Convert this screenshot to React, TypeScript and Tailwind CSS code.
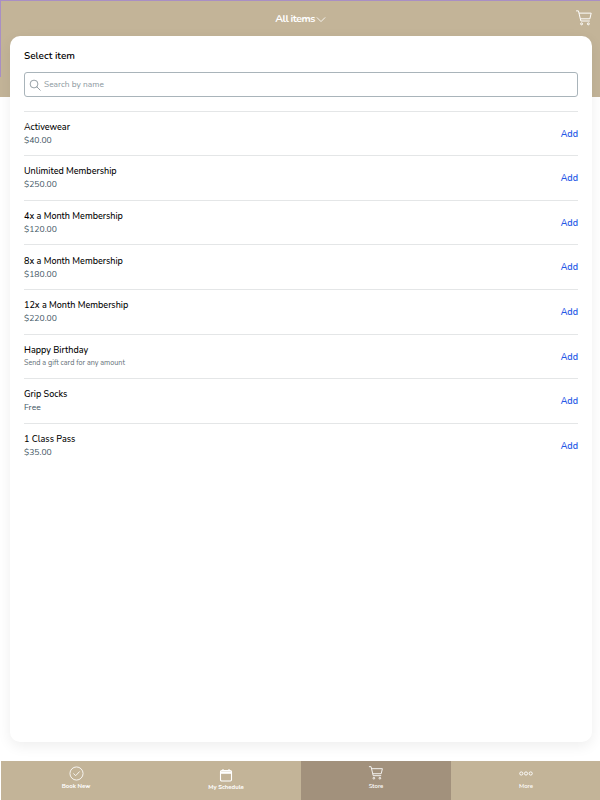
const items = [
  { name: "Activewear", sub: "$40.00" },
  { name: "Unlimited Membership", sub: "$250.00" },
  { name: "4x a Month Membership", sub: "$120.00" },
  { name: "8x a Month Membership", sub: "$180.00" },
  { name: "12x a Month Membership", sub: "$220.00" },
  { name: "Happy Birthday", sub: "Send a gift card for any amount", small: true },
  { name: "Grip Socks", sub: "Free" },
  { name: "1 Class Pass", sub: "$35.00" },
];

function Cart({ className }: { className: string }) {
  return (
    <svg viewBox="0 0 24 24" fill="none" stroke="currentColor" strokeWidth="1.3" className={className}>
      <path d="M2 2.5h2.6l3.2 13.5h11.4" strokeLinecap="round" strokeLinejoin="round" />
      <path d="M5.4 5.5h16.2l-1.8 7.6H7.2" strokeLinejoin="round" />
      <circle cx="8.8" cy="19.8" r="1.3" />
      <circle cx="17.8" cy="19.8" r="1.3" />
    </svg>
  );
}

export default function App() {
  return (
    <div className="relative h-[800px] w-[600px] overflow-hidden bg-white font-['Nunito','Noto_Sans',sans-serif] text-black">
      <div className="h-[97px] bg-[#c3b498]">
        <div className="h-[77px] border-l border-t border-[#a98fc4]">
          <div className="relative flex h-[35px] items-center justify-center pt-px text-white">
            <span className="text-[10.5px] font-bold tracking-[-0.5px]">All items</span>
            <svg viewBox="0 0 12 8" fill="none" stroke="currentColor" strokeWidth="1" className="ml-px h-[7px] w-[10px]">
              <path d="M1 1.5l5 5 5-5" />
            </svg>
            <Cart className="absolute right-[7px] top-[8px] h-[18px] w-[18px]" />
          </div>
        </div>
      </div>

      <div className="ml-[10px] -mt-[61px] flex h-[706px] w-[582px] flex-col rounded-[10px] bg-white px-[14px] shadow-[0_4px_14px_rgba(0,0,0,0.07)]">
        <h1 className="mt-[13px] text-[10px] font-semibold leading-[14px]">Select item</h1>
        <div className="mt-[9px] flex h-[25px] items-center rounded-[3px] border border-[#a9b4ba] pl-[4px]">
          <svg viewBox="0 0 16 16" fill="none" stroke="#74828a" strokeWidth="1" className="h-[12px] w-[12px]">
            <circle cx="6.7" cy="6.7" r="5.2" />
            <path d="M10.5 10.5l4.5 4.5" strokeLinecap="round" />
          </svg>
          <span className="ml-[3px] pt-px text-[8.4px] text-[#8a969d]">Search by name</span>
        </div>
        <ul className="mt-[13.6px]">
          {items.map((item) => (
            <li key={item.name} className="flex h-[44.6px] items-center justify-between border-t border-[#e4e6e7]">
              <div className="pt-px">
                <div className="text-[9px] font-medium leading-[13px]">{item.name}</div>
                <div className={item.small ? "text-[7.2px] leading-[13px] text-[#5f6e76]" : "text-[8.6px] leading-[13px] text-[#3e5563]"}>
                  {item.sub}
                </div>
              </div>
              <span className="pt-[2px] text-[9px] font-semibold text-[#2457e6]">Add</span>
            </li>
          ))}
        </ul>
      </div>

      <nav className="mt-[19px] ml-px grid h-[39px] w-[600px] grid-cols-4 bg-[#c3b498] text-white">
        <div className="flex flex-col items-center pt-[5px]">
          <svg viewBox="0 0 16 16" fill="none" stroke="currentColor" strokeWidth="0.9" className="h-[15px] w-[15px]">
            <circle cx="8" cy="8" r="7" />
            <path d="M5 8.3l2.1 2 4-4.2" strokeLinecap="round" strokeLinejoin="round" />
          </svg>
          <span className="mt-[1px] text-[6px] font-bold leading-[8px]">Book New</span>
        </div>
        <div className="flex flex-col items-center pt-[7px]">
          <svg viewBox="0 0 14 14" fill="none" stroke="currentColor" className="h-[14px] w-[14px]">
            <rect x="1.5" y="2.5" width="11" height="10.5" rx="1.2" strokeWidth="1.1" />
            <path d="M1.5 3.6h11v1.9h-11z" fill="currentColor" strokeWidth="0.6" />
            <path d="M4 1v2M10 1v2" strokeWidth="1.1" />
          </svg>
          <span className="mt-[1px] text-[6px] font-bold leading-[8px]">My Schedule</span>
        </div>
        <div className="flex flex-col items-center bg-[#a2917c] pt-[4px]">
          <Cart className="h-[16px] w-[16px]" />
          <span className="mt-[1px] text-[6px] font-semibold leading-[8px]">Store</span>
        </div>
        <div className="flex flex-col items-center pt-[10px]">
          <svg viewBox="0 0 14 5" fill="none" stroke="currentColor" strokeWidth="0.9" className="h-[5px] w-[14px]">
            <circle cx="2.3" cy="2.5" r="1.6" />
            <circle cx="7" cy="2.5" r="1.6" />
            <circle cx="11.7" cy="2.5" r="1.6" />
          </svg>
          <span className="mt-[6px] text-[6px] font-semibold leading-[8px]">More</span>
        </div>
      </nav>
    </div>
  );
}
